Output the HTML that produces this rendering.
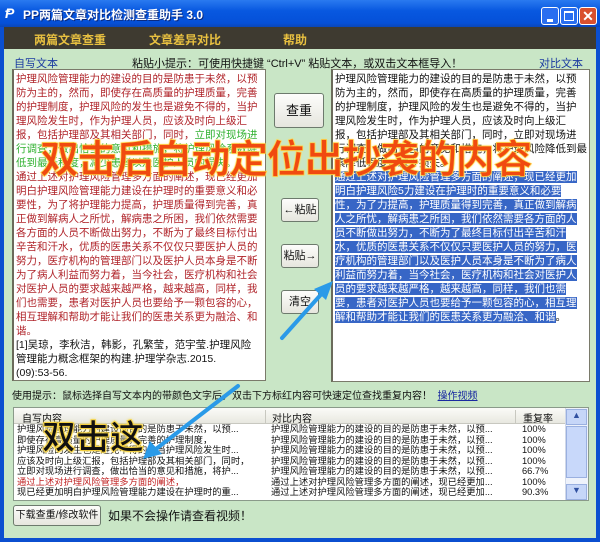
<!DOCTYPE html>
<html><head><meta charset="utf-8"><style>
*{margin:0;padding:0;box-sizing:border-box}
body{width:600px;height:542px;overflow:hidden;background:#0b4fd0;font-family:"Liberation Sans","Noto Sans CJK SC",sans-serif;position:relative}
.a{position:absolute;white-space:nowrap}
#title{left:0;top:0;width:600px;height:27px;background:linear-gradient(#2a7af0,#0858e0 40%,#0550d8 85%,#0a46b8)}
#menu{left:4px;top:27px;width:592px;height:22px;background:#3e3a30}
#main{left:4px;top:49px;width:592px;height:489px;background:#c9e6c6}
.tb{background:#fff;border:1px solid #7a7a6a;border-left:2px solid #6b6b5b}
.ln{position:absolute;left:2px;font-size:10.5px;line-height:14px;height:14px;white-space:nowrap}
.r{color:#b0242a}.g{color:#2eb02e}.k{color:#111}
.hl{background:#3766c6;color:#fff}
.btn{position:absolute;background:linear-gradient(#fdfdfb,#e6e6de);border:1px solid #6d7a6d;border-radius:3px;font-size:11px;color:#111;text-align:center}
.col{position:absolute;overflow:hidden}
.row{font-size:9.3px;line-height:10.5px;height:10.5px;white-space:nowrap;color:#111;overflow:hidden}
.big{font-family:"Liberation Sans","Noto Sans CJK SC",sans-serif;font-weight:700;white-space:nowrap}
</style></head><body>
<div class="a" id="title"></div>
<div class="a" style="left:5px;top:5px;color:#fff;font-size:14px;font-style:italic;font-weight:bold">Ᵽ</div>
<div class="a" style="left:23px;top:6px;color:#fff;font-size:12px;font-weight:bold;text-shadow:1px 1px 0 #0a2a80">PP两篇文章对比检测查重助手 3.0</div>
<div class="a" style="left:541px;top:7px;width:18px;height:18px;border:1px solid #fff;border-radius:3px;background:#2a6ef0"><div style="position:absolute;left:5px;top:11px;width:6px;height:3px;background:#fff"></div></div>
<div class="a" style="left:560px;top:7px;width:18px;height:18px;border:1px solid #fff;border-radius:3px;background:#2a6ef0"><div style="position:absolute;left:3px;top:3px;width:10px;height:10px;border:1px solid #fff;border-top-width:2px"></div></div>
<div class="a" style="left:579px;top:7px;width:18px;height:18px;border:1px solid #fff;border-radius:3px;background:#d9502e;color:#fff;font-size:14px;font-weight:bold;text-align:center;line-height:16px">✕</div>
<div class="a" id="menu"></div>
<div class="a" style="left:34px;top:31px;color:#e8c040;font-size:12px;font-weight:bold">两篇文章查重</div>
<div class="a" style="left:149px;top:31px;color:#e8c040;font-size:12px;font-weight:bold">文章差异对比</div>
<div class="a" style="left:283px;top:31px;color:#e8c040;font-size:12px;font-weight:bold">帮助</div>
<div class="a" id="main"></div>
<div class="a" style="left:14px;top:55px;color:#1a3aa0;font-size:11px">自写文本</div>
<div class="a" style="left:132px;top:55px;color:#111;font-size:11px">粘贴小提示：可使用快捷键 “Ctrl+V” 粘贴文本，或双击文本框导入！</div>
<div class="a" style="left:539px;top:55px;color:#1a3aa0;font-size:11px">对比文本</div>

<div class="a tb" style="left:12px;top:69px;width:254px;height:312px;overflow:hidden">
<div class="ln r" style="top:2px">护理风险管理能力的建设的目的是防患于未然，以预</div>
<div class="ln r" style="top:16px">防为主的，然而，即使存在高质量的护理质量，完善</div>
<div class="ln r" style="top:30px">的护理制度，护理风险的发生也是避免不得的，当护</div>
<div class="ln r" style="top:44px">理风险发生时，作为护理人员，应该及时向上级汇</div>
<div class="ln r" style="top:58px">报，包括护理部及其相关部门，同时，<span class="g">立即对现场进</span></div>
<div class="ln g" style="top:72px">行调查，做出恰当的意见和措施，将护理风险系数降</div>
<div class="ln g" style="top:86px">低到最低程度，减少患者以及医护人员的损失。</div>
<div class="ln r" style="top:100px">通过上述对护理风险管理多方面的阐述，现已经更加</div>
<div class="ln r" style="top:114px">明白护理风险管理能力建设在护理时的重要意义和必</div>
<div class="ln r" style="top:128px">要性，为了将护理能力提高，护理质量得到完善，真</div>
<div class="ln r" style="top:142px">正做到解病人之所忧，解病患之所困，我们依然需要</div>
<div class="ln r" style="top:156px">各方面的人员不断做出努力，不断为了最终目标付出</div>
<div class="ln r" style="top:170px">辛苦和汗水，优质的医患关系不仅仅只要医护人员的</div>
<div class="ln r" style="top:184px">努力，医疗机构的管理部门以及医护人员本身是不断</div>
<div class="ln r" style="top:198px">为了病人利益而努力着，当今社会，医疗机构和社会</div>
<div class="ln r" style="top:212px">对医护人员的要求越来越严格，越来越高，同样，我</div>
<div class="ln r" style="top:226px">们也需要，患者对医护人员也要给予一颗包容的心，</div>
<div class="ln r" style="top:240px">相互理解和帮助才能让我们的医患关系更为融洽、和</div>
<div class="ln r" style="top:254px">谐。</div>
<div class="ln k" style="top:268px">[1]吴琼，李秋洁，韩影，孔繁莹，范宇莹.护理风险</div>
<div class="ln k" style="top:282px">管理能力概念框架的构建.护理学杂志.2015.</div>
<div class="ln k" style="top:296px">(09):53-56.</div>
</div>

<div class="a tb" style="left:331px;top:69px;width:259px;height:313px;overflow:hidden">
<div class="ln k" style="top:2px">护理风险管理能力的建设的目的是防患于未然，以预</div>
<div class="ln k" style="top:16px">防为主的，然而，即使存在高质量的护理质量，完善</div>
<div class="ln k" style="top:30px">的护理制度，护理风险的发生也是避免不得的，当护</div>
<div class="ln k" style="top:44px">理风险发生时，作为护理人员，应该及时向上级汇</div>
<div class="ln k" style="top:58px">报，包括护理部及其相关部门，同时，立即对现场进</div>
<div class="ln k" style="top:72px">行调查，做出恰当的意见和措施，将护理风险降低到最</div>
<div class="ln k" style="top:86px">素降低程度，减少损失。</div>
<div class="ln" style="top:100px"><span class="hl">通过上述对护理风险管理多方面的阐述，现已经更加</span></div>
<div class="ln" style="top:114px"><span class="hl">明白护理风险5力建设在护理时的重要意义和必要</span></div>
<div class="ln" style="top:128px"><span class="hl">性，为了力提高，护理质量得到完善，真正做到解病</span></div>
<div class="ln" style="top:142px"><span class="hl">人之所忧，解病患之所困，我们依然需要各方面的人</span></div>
<div class="ln" style="top:156px"><span class="hl">员不断做出努力，不断为了最终目标付出辛苦和汗</span></div>
<div class="ln" style="top:170px"><span class="hl">水，优质的医患关系不仅仅只要医护人员的努力，医</span></div>
<div class="ln" style="top:184px"><span class="hl">疗机构的管理部门以及医护人员本身是不断为了病人</span></div>
<div class="ln" style="top:198px"><span class="hl">利益而努力着，当今社会，医疗机构和社会对医护人</span></div>
<div class="ln" style="top:212px"><span class="hl">员的要求越来越严格，越来越高，同样，我们也需</span></div>
<div class="ln" style="top:226px"><span class="hl">要，患者对医护人员也要给予一颗包容的心，相互理</span></div>
<div class="ln" style="top:240px"><span class="hl">解和帮助才能让我们的医患关系更为融洽、和谐</span>。</div>
</div>

<div class="btn" style="left:274px;top:93px;width:50px;height:35px;line-height:33px;font-size:13px">查重</div>
<div class="btn" style="left:281px;top:198px;width:38px;height:24px;line-height:22px">←粘贴</div>
<div class="btn" style="left:281px;top:244px;width:38px;height:24px;line-height:22px">粘贴→</div>
<div class="btn" style="left:281px;top:290px;width:38px;height:24px;line-height:22px">清空</div>

<div class="a" style="left:12px;top:387px;font-size:10px;color:#111">使用提示：鼠标选择自写文本内的带颜色文字后，双击下方标红内容可快速定位查找重复内容！ &nbsp;<span style="color:#1a2aa0;text-decoration:underline">操作视频</span></div>

<div class="a" style="left:13px;top:407px;width:576px;height:94px;background:#fff;border:1px solid #8a9a8a"></div>
<div class="a" style="left:14px;top:408px;width:551px;height:16px;background:linear-gradient(#fbfbf8,#e8e8e0);border-bottom:1px solid #c8c8c0"></div>
<div class="a" style="left:265px;top:410px;width:1px;height:13px;background:#c8c8c0"></div>
<div class="a" style="left:515px;top:410px;width:1px;height:13px;background:#c8c8c0"></div>
<div class="a" style="left:22px;top:410px;font-size:10px;color:#111">自写内容</div>
<div class="a" style="left:272px;top:410px;font-size:10px;color:#111">对比内容</div>
<div class="a" style="left:523px;top:410px;font-size:10px;color:#111">重复率</div>
<div class="a" style="left:565px;top:408px;width:23px;height:92px;background:#eef2fb;border-left:1px solid #d0d8e8"></div>
<div class="a" style="left:566px;top:409px;width:21px;height:16px;background:#c6d6f8;border:1px solid #9ab0e0;color:#3050a0;font-size:9px;text-align:center">▲</div>
<div class="a" style="left:566px;top:426px;width:21px;height:52px;background:#c8d8fa;border:1px solid #9ab0e0"></div>
<div class="a" style="left:566px;top:484px;width:21px;height:16px;background:#c6d6f8;border:1px solid #9ab0e0;color:#3050a0;font-size:9px;text-align:center">▼</div>

<div class="col" style="left:17px;top:424px;width:245px">
<div class="row">护理风险管理能力的建设的目的是防患于未然，以预...</div>
<div class="row">即使存在高质量的护理质量，完善的护理制度，</div>
<div class="row">护理风险的发生也是避免不得的，当护理风险发生时...</div>
<div class="row">应该及时向上级汇报，包括护理部及其相关部门，同时，</div>
<div class="row">立即对现场进行调查，做出恰当的意见和措施，将护...</div>
<div class="row" style="color:#c02020">通过上述对护理风险管理多方面的阐述，</div>
<div class="row">现已经更加明白护理风险管理能力建设在护理时的重...</div>
</div>
<div class="col" style="left:271px;top:424px;width:243px">
<div class="row">护理风险管理能力的建设的目的是防患于未然，以预...</div>
<div class="row">护理风险管理能力的建设的目的是防患于未然，以预...</div>
<div class="row">护理风险管理能力的建设的目的是防患于未然，以预...</div>
<div class="row">护理风险管理能力的建设的目的是防患于未然，以预...</div>
<div class="row">护理风险管理能力的建设的目的是防患于未然，以预...</div>
<div class="row">通过上述对护理风险管理多方面的阐述，现已经更加...</div>
<div class="row">通过上述对护理风险管理多方面的阐述，现已经更加...</div>
</div>
<div class="col" style="left:522px;top:424px;width:40px">
<div class="row">100%</div><div class="row">100%</div><div class="row">100%</div><div class="row">100%</div><div class="row">66.7%</div><div class="row">100%</div><div class="row">90.3%</div>
</div>

<div class="btn" style="left:13px;top:505px;width:88px;height:21px;line-height:19px;font-size:10px">下载查重/修改软件</div>
<div class="a" style="left:108px;top:507px;font-size:12px;color:#111">如果不会操作请查看视频！</div>

<svg class="a" style="left:0;top:0" width="600" height="542">
<g stroke="#2a9ae8" stroke-width="4" fill="#2a9ae8" stroke-linecap="round">
<line x1="282" y1="338" x2="325" y2="290"/><polygon points="333,281 314,289 326,300" stroke="none"/>
<line x1="238" y1="386" x2="152" y2="452"/><polygon points="143,459 150,441 162,454" stroke="none"/>
</g>
</svg>
<div class="a big" style="left:40px;top:129px;font-size:39px;color:#f04a10;letter-spacing:-1.2px;-webkit-text-stroke:0.7px #ffd040;text-shadow:0 0 2px #ffe060"> 双击后自动定位出抄袭的内容</div>
<div class="a big" style="left:42px;top:410px;font-size:34px;color:#111;-webkit-text-stroke:1px #f4d040;text-shadow:0 0 3px #f8e060,0 0 2px #f8e060">双击这</div>
</body></html>
